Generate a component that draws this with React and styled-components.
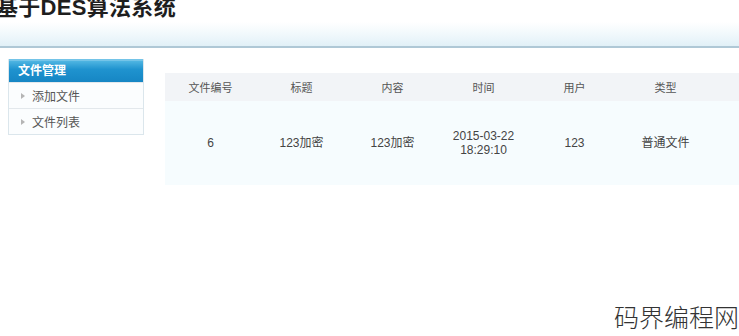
import React from 'react';
import styled, { createGlobalStyle } from 'styled-components';

const GlobalStyle = createGlobalStyle`
  html, body {
    margin: 0;
    padding: 0;
    background: #ffffff;
    width: 739px;
    height: 336px;
    overflow: hidden;
    font-family: "Liberation Sans", "Noto Sans CJK SC", sans-serif;
  }
`;

const Page = styled.div`
  position: relative;
  width: 739px;
  height: 336px;
  overflow: hidden;
  background: #ffffff;
`;

const Title = styled.h1`
  margin: -6px 0 0 -4px;
  height: 28px;
  line-height: 28px;
  font-size: 22px;
  font-weight: bold;
  letter-spacing: 0.3px;
  color: #1e1e1e;
  white-space: nowrap;
`;

const Band = styled.div`
  height: 24px;
  background: linear-gradient(to bottom, #ffffff 0%, #eef7fb 60%, #e1f0f7 100%);
  border-bottom: 2px solid #afc8d6;
`;

const Main = styled.div`
  display: flex;
  align-items: flex-start;
  padding: 11px 0 0 8px;
  gap: 21px;
`;

const Sidebar = styled.div`
  width: 134px;
  flex-shrink: 0;
  border: 1px solid #dbe6ec;
  border-top: none;
  background: #fbfdfe;
`;

const MenuHead = styled.div`
  height: 21px;
  line-height: 21px;
  padding-left: 9px;
  font-size: 12px;
  font-weight: bold;
  color: #ffffff;
  background: linear-gradient(to bottom, #4fb5e2 0%, #1f93cf 40%, #1686c4 100%);
  border-top: 2px solid #74c4e8;
`;

const MenuItem = styled.div`
  display: flex;
  align-items: center;
  height: 25px;
  padding-left: 12px;
  gap: 7px;
  font-size: 12px;
  color: #555;
  border-top: 1px solid #e3e8ec;
`;

const Arrow = styled.span`
  width: 0;
  height: 0;
  border-top: 3px solid transparent;
  border-bottom: 3px solid transparent;
  border-left: 4px solid #b5b5b5;
`;

const Content = styled.div`
  flex: 1;
  padding-top: 14px;
`;

const Table = styled.table`
  border-collapse: collapse;
  width: 100%;
  table-layout: fixed;
`;

const HeadRow = styled.tr`
  background: #f2f4f7;
  height: 28px;
`;

const Th = styled.th`
  width: ${(p) => p.w || 'auto'};
  font-size: 11px;
  font-weight: normal;
  color: #555;
  text-align: center;
  padding: 0;
`;

const BodyRow = styled.tr`
  background: #f6fcfe;
  height: 84px;
`;

const Td = styled.td`
  font-size: 12px;
  color: #444;
  text-align: center;
  line-height: 14px;
  padding: 0;
`;

const Watermark = styled.div`
  position: absolute;
  right: 0;
  bottom: 7px;
  font-family: "Noto Sans CJK SC", sans-serif;
  font-weight: 300;
  font-size: 25px;
  color: #333;
  line-height: 25px;
`;

const columns = ['文件编号', '标题', '内容', '时间', '用户', '类型'];
const rows = [
  { id: '6', title: '123加密', content: '123加密', time: ['2015-03-22', '18:29:10'], user: '123', type: '普通文件' },
];

export default function App() {
  return (
    <Page>
      <GlobalStyle />
      <Title>基于DES算法系统</Title>
      <Band />
      <Main>
        <Sidebar>
          <MenuHead>文件管理</MenuHead>
          <MenuItem>
            <Arrow />
            添加文件
          </MenuItem>
          <MenuItem>
            <Arrow />
            文件列表
          </MenuItem>
        </Sidebar>
        <Content>
          <Table>
            <thead>
              <HeadRow>
                {columns.map((c) => (
                  <Th key={c} w="91px">{c}</Th>
                ))}
                <Th />
              </HeadRow>
            </thead>
            <tbody>
              {rows.map((r) => (
                <BodyRow key={r.id}>
                  <Td>{r.id}</Td>
                  <Td>{r.title}</Td>
                  <Td>{r.content}</Td>
                  <Td>
                    {r.time[0]}
                    <br />
                    {r.time[1]}
                  </Td>
                  <Td>{r.user}</Td>
                  <Td>{r.type}</Td>
                  <Td />
                </BodyRow>
              ))}
            </tbody>
          </Table>
        </Content>
      </Main>
      <Watermark>码界编程网</Watermark>
    </Page>
  );
}
